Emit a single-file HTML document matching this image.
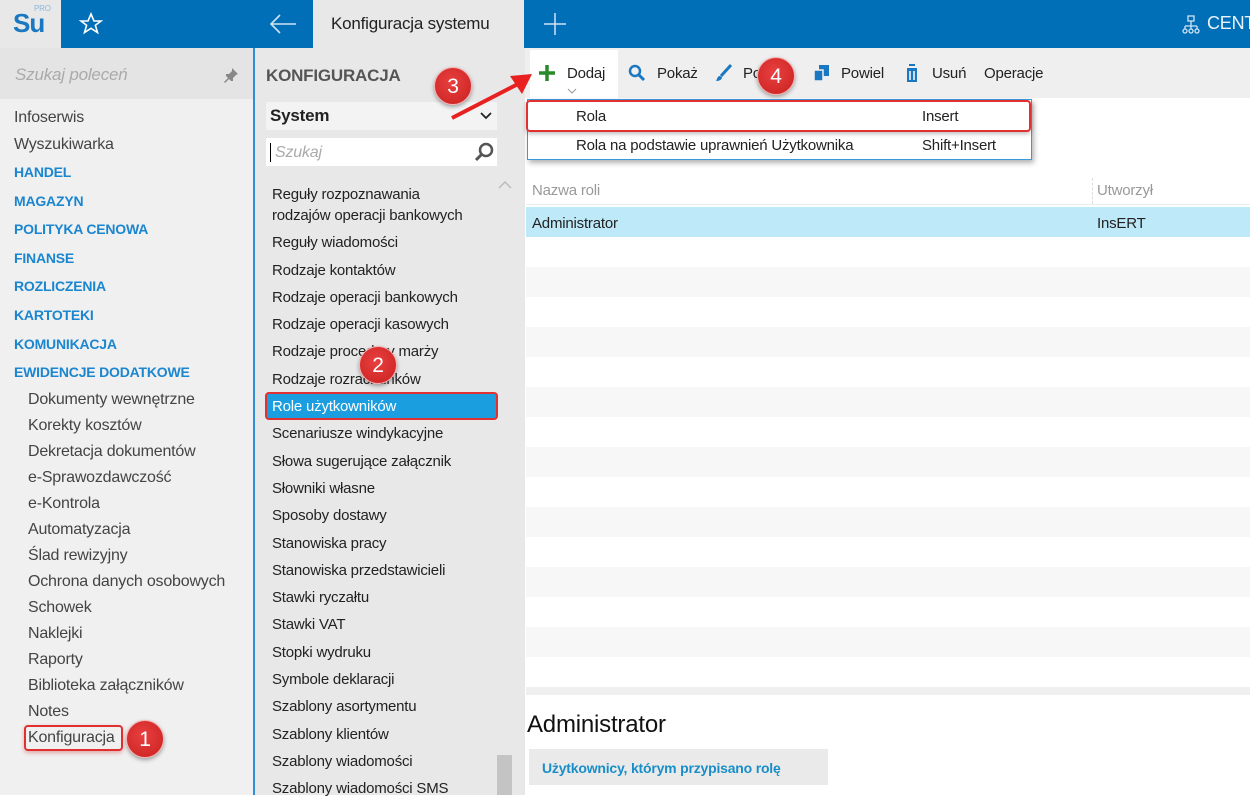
<!DOCTYPE html>
<html><head><meta charset="utf-8"><style>
*{margin:0;padding:0;box-sizing:border-box}
body{width:1250px;height:795px;overflow:hidden;font-family:"Liberation Sans",sans-serif;font-size:15px;color:#222;background:#fff;position:relative;letter-spacing:-0.2px}
.a{position:absolute;white-space:nowrap}
.top{position:absolute;left:0;top:0;width:1250px;height:48px;background:#006fb8}
.nav .a{left:14px}
.sub{left:28px!important;color:#444}
.cat{color:#1a86cf;font-weight:bold;font-size:14px}
.mid .a{left:272px}
.badge{position:absolute;width:38px;height:38px;border-radius:50%;background:radial-gradient(circle at 45% 40%,#e84040,#c91f1f);color:#fff;font-size:21px;text-align:center;line-height:38px;box-shadow:0 2px 4px rgba(0,0,0,.35);border:1px solid #f6b0b0}
.row{position:absolute;left:526px;width:724px;height:30px}
</style></head><body>
<div class="top"></div>
<div class="a" style="left:0;top:0;width:61px;height:48px;background:#e8e8e8"></div>
<div class="a" style="left:13px;top:8px;color:#1a78c2;font-size:26px;font-weight:bold;letter-spacing:-1px">Su</div>
<div class="a" style="left:34px;top:4px;color:#8ab8dc;font-size:8px">PRO</div>
<svg class="a" style="left:79px;top:12px" width="24" height="24" viewBox="0 0 24 24"><path d="M12 2l3 7h7l-5.6 4.3 2.1 7.2L12 16.3 5.5 20.5l2.1-7.2L2 9h7z" fill="none" stroke="#fff" stroke-width="1.6"/></svg>
<svg class="a" style="left:268px;top:13px" width="30" height="22" viewBox="0 0 30 22"><path d="M28 11H3M12 2L3 11l9 9" fill="none" stroke="#cfe3f3" stroke-width="1.6"/></svg>
<div class="a" style="left:313px;top:0;width:211px;height:48px;background:#e8e8e8"></div>
<div class="a" style="left:331px;top:14px;font-size:17px;color:#222">Konfiguracja systemu</div>
<svg class="a" style="left:543px;top:12px" width="24" height="24"><path d="M12 1v22M1 12h22" stroke="#cfe3f3" stroke-width="1.5"/></svg>
<svg class="a" style="left:1181px;top:15px" width="20" height="20" viewBox="0 0 20 20" fill="none" stroke="#cfe3f3" stroke-width="1.3"><rect x="7" y="1" width="6" height="5"/><path d="M10 6v5M4 11h12M4 11v3M16 11v3M10 11v3"/><circle cx="4" cy="16" r="2"/><circle cx="10" cy="16" r="2"/><circle cx="16" cy="16" r="2"/></svg>
<div class="a" style="left:1207px;top:13px;color:#eaf3fb;font-size:18px">CENT</div>

<!-- left nav -->
<div class="a" style="left:0;top:48px;width:253px;height:747px;background:#f0f0f0"></div>
<div class="a" style="left:0;top:48px;width:253px;height:51px;background:#e4e4e4"></div>
<div class="a" style="left:15px;top:65px;font-style:italic;color:#aaa;font-size:17px">Szukaj poleceń</div>
<svg class="a" style="left:223px;top:67px" width="16" height="16" viewBox="0 0 16 16"><path d="M9 1l6 6-2 1-3 3 0 3-2 0-2-2-4 4-1-1 4-4-2-2 0-2 3 0 3-3z" fill="#888"/></svg>
<div class="a" style="left:253px;top:48px;width:2px;height:747px;background:#2d8fd6"></div>
<div class="nav">
<div class="a" style="top:109px;color:#444;font-size:16px">Infoserwis</div>
<div class="a" style="top:136px;color:#444;font-size:16px">Wyszukiwarka</div>
<div class="a cat" style="top:164px">HANDEL</div>
<div class="a cat" style="top:193px">MAGAZYN</div>
<div class="a cat" style="top:221px">POLITYKA CENOWA</div>
<div class="a cat" style="top:250px">FINANSE</div>
<div class="a cat" style="top:278px">ROZLICZENIA</div>
<div class="a cat" style="top:307px">KARTOTEKI</div>
<div class="a cat" style="top:336px">KOMUNIKACJA</div>
<div class="a cat" style="top:364px">EWIDENCJE DODATKOWE</div>
<div class="a sub" style="top:391px;font-size:16px">Dokumenty wewnętrzne</div>
<div class="a sub" style="top:417px;font-size:16px">Korekty kosztów</div>
<div class="a sub" style="top:443px;font-size:16px">Dekretacja dokumentów</div>
<div class="a sub" style="top:469px;font-size:16px">e-Sprawozdawczość</div>
<div class="a sub" style="top:495px;font-size:16px">e-Kontrola</div>
<div class="a sub" style="top:521px;font-size:16px">Automatyzacja</div>
<div class="a sub" style="top:547px;font-size:16px">Ślad rewizyjny</div>
<div class="a sub" style="top:573px;font-size:16px">Ochrona danych osobowych</div>
<div class="a sub" style="top:599px;font-size:16px">Schowek</div>
<div class="a sub" style="top:625px;font-size:16px">Naklejki</div>
<div class="a sub" style="top:651px;font-size:16px">Raporty</div>
<div class="a sub" style="top:677px;font-size:16px">Biblioteka załączników</div>
<div class="a sub" style="top:703px;font-size:16px">Notes</div>
<div class="a" style="left:24px;top:725px;width:99px;height:26px;border:2px solid #e03030;border-radius:4px;box-shadow:0 2px 4px rgba(200,0,0,.3)"></div>
<div class="a sub" style="top:729px;font-size:16px">Konfiguracja</div>
</div>
<div class="badge" style="left:126px;top:720px">1</div>

<!-- middle -->
<div class="a" style="left:255px;top:48px;width:270px;height:747px;background:#e8e8e8"></div>
<div class="a" style="left:266px;top:66px;font-weight:bold;font-size:17px;color:#555">KONFIGURACJA</div>
<div class="a" style="left:266px;top:102px;width:231px;height:28px;background:#f3f3f3"></div>
<div class="a" style="left:270px;top:106px;font-weight:bold;font-size:17px;color:#222">System</div>
<svg class="a" style="left:480px;top:112px" width="12" height="8"><path d="M1 1l5 5 5-5" fill="none" stroke="#222" stroke-width="1.8"/></svg>
<div class="a" style="left:266px;top:138px;width:231px;height:28px;background:#fff"></div>
<div class="a" style="left:270px;top:143px;width:1px;height:19px;background:#000"></div>
<div class="a" style="left:275px;top:144px;font-style:italic;color:#aaa;font-size:16px">Szukaj</div>
<svg class="a" style="left:474px;top:142px" width="20" height="20"><circle cx="12" cy="8" r="6" fill="none" stroke="#555" stroke-width="2.5"/><path d="M8 12l-6 6" stroke="#555" stroke-width="3"/></svg>
<svg class="a" style="left:498px;top:181px" width="14" height="8"><path d="M1 7l6-6 6 6" fill="none" stroke="#bbb" stroke-width="1.5"/></svg>
<div class="a" style="left:497px;top:755px;width:15px;height:40px;background:#c4c4c4"></div>
<div class="mid">
<div class="a" style="top:186px">Reguły rozpoznawania</div>
<div class="a" style="top:207px">rodzajów operacji bankowych</div>
<div class="a" style="top:234px">Reguły wiadomości</div>
<div class="a" style="top:262px">Rodzaje kontaktów</div>
<div class="a" style="top:289px">Rodzaje operacji bankowych</div>
<div class="a" style="top:316px">Rodzaje operacji kasowych</div>
<div class="a" style="top:343px">Rodzaje procedury marży</div>
<div class="a" style="top:371px">Rodzaje rozrachunków</div>
<div class="a" style="left:265px!important;top:392px;width:233px;height:28px;background:#1a9ee0;border:2px solid #e03030;border-radius:4px"></div>
<div class="a" style="top:398px;color:#fff">Role użytkowników</div>
<div class="a" style="top:425px">Scenariusze windykacyjne</div>
<div class="a" style="top:453px">Słowa sugerujące załącznik</div>
<div class="a" style="top:480px">Słowniki własne</div>
<div class="a" style="top:507px">Sposoby dostawy</div>
<div class="a" style="top:535px">Stanowiska pracy</div>
<div class="a" style="top:562px">Stanowiska przedstawicieli</div>
<div class="a" style="top:589px">Stawki ryczałtu</div>
<div class="a" style="top:616px">Stawki VAT</div>
<div class="a" style="top:644px">Stopki wydruku</div>
<div class="a" style="top:671px">Symbole deklaracji</div>
<div class="a" style="top:698px">Szablony asortymentu</div>
<div class="a" style="top:726px">Szablony klientów</div>
<div class="a" style="top:753px">Szablony wiadomości</div>
<div class="a" style="top:780px">Szablony wiadomości SMS</div>
</div>
<div class="badge" style="left:359px;top:346px">2</div>

<!-- right -->
<div class="a" style="left:525px;top:48px;width:725px;height:50px;background:#efefef"></div>
<div class="a" style="left:530px;top:50px;width:88px;height:48px;background:#fff"></div>
<svg class="a" style="left:538px;top:64px" width="18" height="18"><path d="M9 1v16M1 9h16" stroke="#2a8a2a" stroke-width="3.5"/></svg>
<div class="a" style="left:567px;top:65px">Dodaj</div>
<svg class="a" style="left:567px;top:88px" width="10" height="6"><path d="M1 1l4 4 4-4" fill="none" stroke="#999"/></svg>
<svg class="a" style="left:628px;top:64px" width="18" height="18"><circle cx="7" cy="7" r="5" fill="none" stroke="#1a78c2" stroke-width="2.5"/><path d="M11 11l5 5" stroke="#1a78c2" stroke-width="3"/></svg>
<div class="a" style="left:657px;top:65px">Pokaż</div>
<svg class="a" style="left:715px;top:64px" width="18" height="18"><path d="M16 1L6 12" stroke="#1a78c2" stroke-width="3"/><path d="M5 12c-3 0-3 4-4 5 3 0 6-1 6-4z" fill="#1a78c2"/></svg>
<div class="a" style="left:743px;top:65px">Popraw</div>
<svg class="a" style="left:813px;top:64px" width="18" height="18"><rect x="6" y="1" width="10" height="11" fill="#1a78c2"/><rect x="1" y="6" width="9" height="11" fill="#1a78c2" stroke="#efefef" stroke-width="1.5"/></svg>
<div class="a" style="left:841px;top:65px">Powiel</div>
<svg class="a" style="left:904px;top:63px" width="16" height="20"><path d="M1 3h14M5 3V1h6v2M3 5h10v14H3z" fill="#1a78c2"/><path d="M6 8v9M10 8v9" stroke="#fff" stroke-width="1.5"/></svg>
<div class="a" style="left:932px;top:65px">Usuń</div>
<div class="a" style="left:984px;top:65px">Operacje</div>
<div class="badge" style="left:757px;top:57px">4</div>

<div class="row" style="top:175px;height:30px;background:#fff;border-bottom:1px solid #eee"></div>
<div class="a" style="left:1092px;top:178px;width:1px;height:26px;border-left:1px dashed #ddd"></div>
<div class="a" style="left:532px;top:182px;color:#999">Nazwa roli</div>
<div class="a" style="left:1097px;top:182px;color:#999">Utworzył</div>
<div class="row" style="top:207px;background:#bee9f9"></div>
<div class="a" style="left:532px;top:215px">Administrator</div>
<div class="a" style="left:1097px;top:215px">InsERT</div>
<div class="row" style="top:237px;background:#fff"></div>
<div class="row" style="top:267px;background:#f7f7f7"></div>
<div class="row" style="top:297px;background:#fff"></div>
<div class="row" style="top:327px;background:#f7f7f7"></div>
<div class="row" style="top:357px;background:#fff"></div>
<div class="row" style="top:387px;background:#f7f7f7"></div>
<div class="row" style="top:417px;background:#fff"></div>
<div class="row" style="top:447px;background:#f7f7f7"></div>
<div class="row" style="top:477px;background:#fff"></div>
<div class="row" style="top:507px;background:#f7f7f7"></div>
<div class="row" style="top:537px;background:#fff"></div>
<div class="row" style="top:567px;background:#f7f7f7"></div>
<div class="row" style="top:597px;background:#fff"></div>
<div class="row" style="top:627px;background:#f7f7f7"></div>
<div class="row" style="top:657px;background:#fff"></div>
<div class="row" style="top:687px;height:8px;background:#efefef"></div>
<div class="a" style="left:527px;top:711px;font-size:24px;color:#111">Administrator</div>
<div class="a" style="left:529px;top:749px;width:299px;height:36px;background:#eaeaea"></div>
<div class="a" style="left:542px;top:760px;color:#1a8ec8;font-weight:bold;font-size:14px">Użytkownicy, którym przypisano rolę</div>

<!-- dropdown -->
<div class="a" style="left:527px;top:99px;width:505px;height:61px;background:#fff;border:1px solid #3a9ad9;box-shadow:2px 3px 5px rgba(0,0,0,.3)"></div>
<div class="a" style="left:526px;top:100px;width:505px;height:32px;border:2px solid #e03030;border-radius:4px;box-shadow:0 2px 4px rgba(0,0,0,.25)"></div>
<div class="a" style="left:576px;top:108px">Rola</div>
<div class="a" style="left:922px;top:108px">Insert</div>
<div class="a" style="left:576px;top:137px">Rola na podstawie uprawnień Użytkownika</div>
<div class="a" style="left:922px;top:137px">Shift+Insert</div>

<!-- arrow + badge 3 -->
<svg class="a" style="left:448px;top:66px" width="90" height="56"><path d="M4 52L70 18" stroke="#e82020" stroke-width="4"/><path d="M84 8L62 10 74 28z" fill="#e82020"/></svg>
<div class="badge" style="left:434px;top:67px">3</div>
</body></html>
